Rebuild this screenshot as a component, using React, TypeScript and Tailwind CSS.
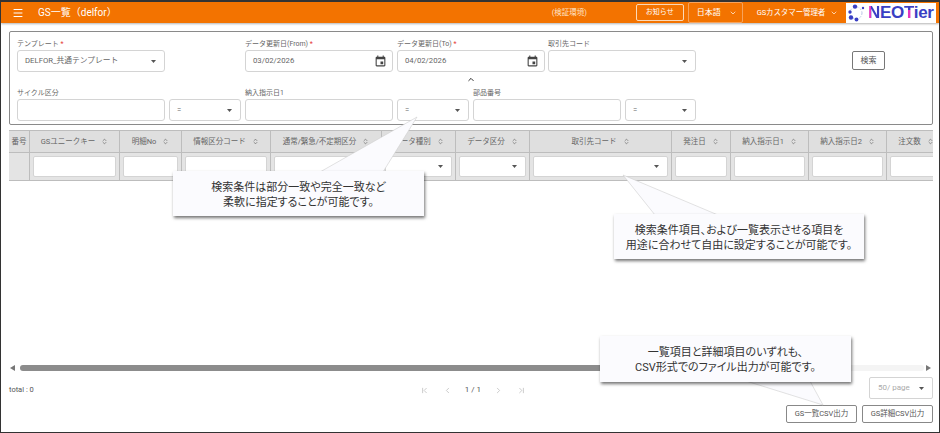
import React from 'react';
import { Menu, ChevronDown, ChevronUp, ChevronsUpDown, ChevronLeft, ChevronRight, ChevronFirst, ChevronLast } from 'lucide-react';

const FONT = "font-['Roboto','Noto_Sans_CJK_JP',sans-serif]";

const Caret = () => (
  <svg width="5" height="3" viewBox="0 0 5 3" className="shrink-0"><path d="M0 0h5L2.5 3z" fill="#555" /></svg>
);

const EventIcon = () => (
  <svg width="13" height="13" viewBox="0 0 24 24" className="-mr-[3px] shrink-0">
    <path fill="#444" d="M17 12h-5v5h5v-5zM16 1v2H8V1H6v2H5c-1.11 0-1.99.9-1.99 2L3 19c0 1.1.89 2 2 2h14c1.1 0 2-.9 2-2V5c0-1.1-.9-2-2-2h-1V1h-2zm3 18H5V8h14v11z" />
  </svg>
);

const Field = ({ label, required, width, value, caret, date }: { label?: string; required?: boolean; width: string; value?: string; caret?: boolean; date?: boolean }) => (
  <div className={`${width} shrink-0`}>
    <div className="h-[13px] text-[7px] leading-[15px] text-[#666] whitespace-nowrap">
      {label}
      {required && <span className="text-[#e53935]"> *</span>}
    </div>
    <div className="flex h-[22px] items-center justify-between rounded-[3px] border border-[#d4d4d4] bg-white pl-[7px] pr-2 text-[7.75px] text-[#666]">
      <span className="whitespace-nowrap">{value}</span>
      {caret && <Caret />}
      {date && <EventIcon />}
    </div>
  </div>
);

const columns = [
  { label: '番号', width: 'w-[21px]', noInput: true },
  { label: 'GSユニークキー', width: 'w-[90px]' },
  { label: '明細No', width: 'w-[62px]' },
  { label: '情報区分コード', width: 'w-[89px]' },
  { label: '通常/緊急/不定期区分', width: 'w-[111px]' },
  { label: 'データ種別', width: 'w-[74px]', caret: true },
  { label: 'データ区分', width: 'w-[74px]', caret: true },
  { label: '取引先コード', width: 'w-[142px]', caret: true },
  { label: '発注日', width: 'w-[59px]' },
  { label: '納入指示日1', width: 'w-[78px]' },
  { label: '納入指示日2', width: 'w-[78px]' },
  { label: '注文数', width: 'w-[59px]' },
];

const Callout = ({ box, lines }: { box: string; lines: string[] }) => (
  <div className={`absolute ${box} flex flex-col items-center justify-center bg-[#fbfbfe] pt-[2px] text-[11px] leading-[15px] text-[#333] shadow-[1px_2px_3px_rgba(0,0,0,0.55)] [font-feature-settings:'palt']`}>
    {lines.map((l) => (
      <div key={l} className="whitespace-nowrap">{l}</div>
    ))}
  </div>
);

const Tail = ({ points }: { points: string }) => (
  <polygon points={points} fill="#fbfbfe" stroke="#cfcfcf" strokeWidth="0.6" />
);

export default function App() {
  return (
    <div className={`${FONT} relative flex h-[433px] w-[940px] flex-col overflow-hidden border-x border-b border-t-2 border-[#333] bg-white`}>
      <header className="flex h-[21px] shrink-0 items-center bg-[#f37300] text-white shadow-[0_1px_2px_rgba(0,0,0,0.3)]">
        <Menu size={12} className="ml-[11px]" />
        <span className="ml-[14px] text-[10px]">GS一覧（delfor）</span>
        <span className="ml-[435px] w-[60px] text-[7.5px] text-[#ffe3c8]">(検証環境)</span>
        <button className="ml-[24px] h-[17px] w-[48px] rounded-[2px] border border-[#fbd9b8] text-[7px]">お知らせ</button>
        <div className="ml-[4px] flex h-[21px] w-[55px] items-center rounded-[2px] border border-[#f7a35c] pl-2 text-[8px]">
          日本語 <ChevronDown size={8} className="ml-2" />
        </div>
        <span className="ml-[14px] text-[7.5px] tracking-[-0.1px] whitespace-nowrap">GSカスタマー管理者</span>
        <ChevronDown size={8} className="ml-[5px]" />
        <div className="ml-auto mr-[3px] flex h-[20px] w-[90px] items-center bg-white pl-[1px]">
          <svg width="20" height="18" viewBox="0 0 20 18" fill="none" className="shrink-0">
            <circle cx="9" cy="9" r="6" stroke="#b8c4e8" strokeWidth="1" strokeDasharray="2 1.5" />
            <circle cx="8" cy="2.6" r="2.2" fill="#3a3fc4" />
            <circle cx="3" cy="8" r="1.7" fill="#3a3fc4" />
            <circle cx="4" cy="13.5" r="2.2" fill="#3a3fc4" />
            <circle cx="9.5" cy="15.5" r="1.9" fill="#3a3fc4" />
            <circle cx="16" cy="4" r="1.2" fill="#3a3fc4" />
          </svg>
          <span className="ml-[1px] text-[17px] font-bold tracking-[-0.3px] text-[#3a3fc4] font-['Liberation_Sans',sans-serif]">
            <span className="bg-[linear-gradient(90deg,#e535c0_28%,#3a3fc4_28%)] bg-clip-text text-transparent">N</span>
            EO
            <span className="bg-[linear-gradient(180deg,#3a3fc4_38%,#e535c0_38%)] bg-clip-text text-transparent">T</span>
            ier
          </span>
        </div>
      </header>

      <section className="relative ml-[8px] mt-[8px] h-[94px] w-[924px] shrink-0 rounded-[2px] border border-[#8a8a8a] px-[7px] pt-[5px]">
        <div className="flex">
          <Field label="テンプレート" required width="w-[148px]" value="DELFOR_共通テンプレート" caret />
          <div className="w-[80px] shrink-0" />
          <Field label="データ更新日(From)" required width="w-[148px]" value="03/02/2026" date />
          <div className="w-[4px] shrink-0" />
          <Field label="データ更新日(To)" required width="w-[148px]" value="04/02/2026" date />
          <div className="w-[3px] shrink-0" />
          <Field label="取引先コード" width="w-[148px]" caret />
          <button className="ml-[156px] mt-[14px] h-[19px] w-[33px] rounded-[2px] border border-[#777] text-[8px] text-[#555]">検索</button>
        </div>
        <div className="flex justify-center">
          <ChevronUp size={12} color="#222" strokeWidth={2.5} className="mt-[3px] h-[9px]" />
        </div>
        <div className="mt-[2px] flex gap-[4px]">
          <Field label="サイクル区分" width="w-[148px]" />
          <Field width="w-[72px]" value="=" caret />
          <Field label="納入指示日1" width="w-[148px]" />
          <Field width="w-[72px]" value="=" caret />
          <Field label="部品番号" width="w-[148px]" />
          <Field width="w-[71px]" value="=" caret />
        </div>
      </section>

      <div className="ml-[8px] mt-[5px] flex w-[924px] shrink-0 overflow-hidden">
        {columns.map((c) => (
          <div key={c.label} className={`${c.width} shrink-0`}>
            <div className="flex h-[23px] items-center justify-center gap-[6px] border-y border-r border-[#bdbdbd] bg-[#dfdfdf] text-[7.5px] text-[#666] whitespace-nowrap">
              <span>{c.label}</span>
              {!c.noInput && <ChevronsUpDown size={7} color="#555" className="shrink-0" />}
            </div>
            <div className="flex h-[28px] items-center border-b border-r border-[#bdbdbd] bg-[#e4e4e4] px-[3px]">
              {!c.noInput && (
                <div className="flex h-[21px] w-full items-center justify-end rounded-[2px] border border-[#d4d4d4] bg-white pr-2">
                  {c.caret && <Caret />}
                </div>
              )}
            </div>
          </div>
        ))}
      </div>

      <div className="flex-1" />

      <div className="ml-[9px] flex h-[8px] w-[921px] items-center">
        <svg width="5" height="6" viewBox="0 0 5 6" className="shrink-0"><path d="M5 0v6L0 3z" fill="#777" /></svg>
        <div className="ml-[5px] h-[6px] flex-1 rounded-full bg-[#f4f4f4]">
          <div className="h-[6px] w-[700px] rounded-full bg-[#8c8c8c]" />
        </div>
        <svg width="5" height="6" viewBox="0 0 5 6" className="ml-[2px] shrink-0"><path d="M0 0v6l5-3z" fill="#777" /></svg>
      </div>

      <div className="ml-[8px] mt-[5px] flex h-[22px] w-[924px] items-start">
        <span className="mt-[7px] text-[7.5px] text-[#555]">total : 0</span>
        <div className="ml-[386px] mt-[7px] flex items-center text-[#bbb]">
          <ChevronFirst size={9} />
          <ChevronLeft size={9} className="ml-[14px]" />
          <span className="mx-[13px] text-[8px] text-[#555]">1 / 1</span>
          <ChevronRight size={9} />
          <ChevronLast size={9} className="ml-[14px]" />
        </div>
        <div className="ml-auto flex h-[22px] w-[64px] items-center justify-between rounded-[2px] border border-[#d4d4d4] px-2 text-[8px] text-[#aaa]">
          50/ page <Caret />
        </div>
      </div>

      <div className="mb-[9px] mr-[6px] mt-[6px] flex justify-end gap-[5px]">
        <button className="h-[18px] w-[71px] rounded-[2px] border border-[#888] text-[7.5px] text-[#555]">GS一覧CSV出力</button>
        <button className="h-[18px] w-[71px] rounded-[2px] border border-[#888] text-[7.5px] text-[#555]">GS詳細CSV出力</button>
      </div>

      {/* annotation callouts, coordinates are relative to the bordered frame */}
      <svg width="940" height="433" viewBox="0 0 940 433" className="pointer-events-none absolute left-[-1px] top-[-2px]">
        <Tail points="320,172 417,117 383,172" />
        <Tail points="655,215 623,175 718,215" />
        <Tail points="746,381 823,405 810,381" />
      </svg>
      <Callout box="left-[172px] top-[169px] h-[45px] w-[251px]" lines={['検索条件は部分一致や完全一致など', '柔軟に指定することが可能です。']} />
      <Callout box="left-[613px] top-[212px] h-[45px] w-[250px]" lines={['検索条件項目、および一覧表示させる項目を', '用途に合わせて自由に設定することが可能です。']} />
      <Callout box="left-[599px] top-[334px] h-[46px] w-[251px]" lines={['一覧項目と詳細項目のいずれも、', 'CSV形式でのファイル出力が可能です。']} />
    </div>
  );
}
